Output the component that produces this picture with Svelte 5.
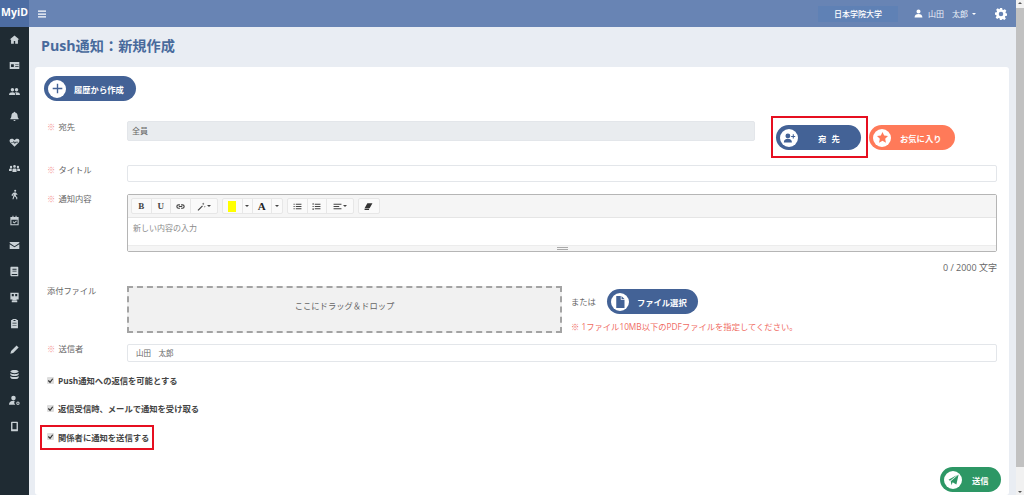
<script>
	// sidebar glyphs, drawn on a 16x16 box
	const navIcons = [
		'M8 2 1 8h2v6h4v-4h2v4h4V8h2z',
		'M1 3h14v10H1zM3 6v4h4V6zm6 0v1h5V6zm0 3v1h5V9z',
		'M5 3a2.5 2.5 0 1 1 0 5 2.5 2.5 0 0 1 0-5zm6 0a2.5 2.5 0 1 1 0 5 2.5 2.5 0 0 1 0-5zM0 13c0-3 2-4 5-4s4 1 4 4zm10 0c0-2-.3-3-1.300-3.800C9.300 9 10 9 11 9c3 0 5 1 5 4z',
		'M8 1c.6 0 1 .4 1 1 2.500.5 3.500 2.500 3.500 5 0 3 1.500 4 1.500 4v1H2v-1s1.500-1 1.500-4c0-2.500 1-4.500 3.500-5 0-.6.4-1 1-1zM6.500 13h3a1.500 1.500 0 0 1-3 0z',
		'M8 14 1.500 7.500C0 5.500 1 2.500 4 2.500c2 0 3 1 4 2.200 1-1.200 2-2.200 4-2.200 3 0 4 3 2.500 5zM3 7.500h3l1-2 1.500 3 1-1.500H13v1h-3l-1.500 2L7 7.500l-.5 1H3z',
		'M8 3a2 2 0 1 1 0 4 2 2 0 0 1 0-4zM3 4a1.700 1.700 0 1 1 0 3.400A1.700 1.700 0 0 1 3 4zm10 0a1.700 1.700 0 1 1 0 3.400A1.700 1.700 0 0 1 13 4zM5 13V9.500C5 8.500 6 8 8 8s3 .5 3 1.500V13zM0 11.500V9.500C0 8.700 1 8 3 8c.6 0 1 0 1.300.1-.2.400-.3.900-.3 1.400v2zm16 0h-4v-2c0-.5-.1-1-.3-1.400.3-.1.700-.1 1.300-.1 2 0 3 .7 3 1.500z',
		'M9 1a1.500 1.500 0 1 1 0 3 1.500 1.500 0 0 1 0-3zM7 5h3l2.500 3-1 .7L10 7.500V10l2 2v3h-1.500v-2.400L8 10.500 6.500 15H5l2-7.500-1.500 1V10H4V7.500z',
		'M2 3h3V1h1.500v2h3V1H11v2h3v12H2zm1.500 4v6.500h9V7zm1.800 3 1-1 1.500 1.500L10.500 8l1 1-3.800 3.500z',
		'M1 3h14v1.500L8 9 1 4.500zm0 3 7 4.500L15 6v7H1z',
		'M3 1h9.500c.6 0 1 .4 1 1v12c0 .6-.4 1-1 1H4c-1 0-2-.8-2-2V3c0-1 .5-2 1-2zm2 3v1.500h6V4zm0 3v1h6V7zm-1 5.500V13h8v-1.500H4z',
		'M2 1h12v10h-3v1H5v-1H2zm2 2v3h3V3zm5 0v3h3V3zM4 12.500h8V15H4z',
		'M5 3V1.500h6V3h2v12H3V3zm1.500 0v1.500h3V3zM5 7v1h6V7zm0 3v1h6v-1z',
		'M11 2l3 3-8 8-4 1 1-4z',
		'M8 1.500c3.500 0 6 1 6 2.300S11.500 6 8 6 2 5.100 2 3.800s2.500-2.300 6-2.300zM2 5.800C3 7 5.500 7.500 8 7.500S13 7 14 5.800V8c0 1.300-2.500 2.200-6 2.200S2 9.300 2 8zm0 4.200c1 1.200 3.500 1.700 6 1.700s5-.5 6-1.700v2.200c0 1.300-2.500 2.300-6 2.300s-6-1-6-2.300z',
		'M6.500 1a3.300 3.300 0 1 1 0 6.600 3.300 3.300 0 0 1 0-6.600zM0 14c0-3.500 2.500-5.500 6.500-5.500.7 0 1.300 0 1.800.2A4 4 0 0 0 9 14zm13-4.500a2.500 2.500 0 1 1 0 5 2.500 2.500 0 0 1 0-5zm0 1.500a1 1 0 1 0 0 2 1 1 0 0 0 0-2z',
		'M4 1h8c.6 0 1 .4 1 1v12c0 .6-.4 1-1 1H4c-.6 0-1-.4-1-1V2c0-.6.400-1 1-1zm1 2v9h6V3z'
	];
	const checks = [
		{ label: 'Push通知への返信を可能とする', marked: false },
		{ label: '返信受信時、メールで通知を受け取る', marked: false },
		{ label: '関係者に通知を送信する', marked: true }
	];
</script>

<div class="page">
	<aside class="side">
		<div class="brand">MyiD</div>
		<nav class="nav">
			{#each navIcons as d}
				<svg viewBox="0 0 16 16" width="11" height="11"><path fill-rule="evenodd" {d} /></svg>
			{/each}
		</nav>
	</aside>

	<div class="main">
		<header class="top">
			<svg class="burger" viewBox="0 0 8 8" width="8" height="8"><path d="M0 .5h8v1.300H0zm0 2.900h8v1.300H0zm0 2.900h8v1.300H0z" /></svg>
			<div class="school">日本学院大学</div>
			<svg class="user-ic" viewBox="0 0 16 16" width="9" height="9"><path d="M8 1a3.600 3.600 0 1 1 0 7.200A3.600 3.600 0 0 1 8 1zM1 15c0-4 3-6 7-6s7 2 7 6z" /></svg>
			<span class="user">山田　太郎</span>
			<span class="caret"></span>
			<svg class="gear" viewBox="0 0 16 16" width="12" height="12"><path fill-rule="evenodd" d="M6.500 0h3l.4 2.200 1.300.6L13.100 1.500l2.100 2.200-1.300 1.900.6 1.300L16 7.300v3l-2.200.4-.6 1.300 1.300 1.900-2.100 2.100-1.900-1.300-1.300.5L8.800 16H6.500l-.4-2.200-1.300-.5-1.900 1.300L.8 12.500 2.100 10.600 1.600 9.300 0 8.900v-3l2.200-.4.500-1.300L1.500 2.400 3.600.4l1.900 1.200 1-.4zM8 5a3 3 0 1 0 0 6 3 3 0 0 0 0-6z" /></svg>
		</header>

		<div class="body">
			<h1>Push通知：新規作成</h1>
			<section class="card">
				<button class="pill navy history">
					<span class="disc"><svg viewBox="0 0 16 16" width="11" height="11"><path class="navy-ic" d="M7 1h2v6h6v2H9v6H7V9H1V7h6z" /></svg></span>
					<span>履歴から作成</span>
				</button>

				<div class="row to-row">
					<div class="label"><i>※</i> 宛先</div>
					<div class="field readonly">全員</div>
					<div class="outlined">
						<button class="pill navy to">
							<span class="disc"><svg viewBox="0 0 16 16" width="13" height="13"><path class="navy-ic" d="M6 3a3 3 0 1 1 0 6 3 3 0 0 1 0-6zM1 14c0-3 2-4.500 5-4.500s5 1.500 5 4.500zM12 4h1.300v2H15v1.300h-1.700v2H12v-2h-2V6h2z" /></svg></span>
							<span class="to-text">宛 先</span>
						</button>
					</div>
					<button class="pill coral fav">
						<span class="disc"><svg viewBox="0 0 16 16" width="11" height="11"><path class="coral-ic" d="m8 0 2.400 5.200 5.600.7-4.100 3.900 1.100 5.700L8 12.700l-5 2.800 1.100-5.700L0 5.900l5.600-.7z" /></svg></span>
						<span>お気に入り</span>
					</button>
				</div>

				<div class="row title-row">
					<div class="label"><i>※</i> タイトル</div>
					<div class="field title-field"></div>
				</div>

				<div class="row editor-row">
					<div class="label"><i>※</i> 通知内容</div>
					<div class="editor">
						<div class="toolbar">
							<div class="group">
								<span class="tool serif">B</span>
								<span class="tool serif">U</span>
								<span class="tool"><svg viewBox="0 0 16 16" width="9" height="9"><path fill="none" stroke="#444" stroke-width="2" d="M7 5H4.500a3 3 0 0 0 0 6H7m2-6h2.500a3 3 0 0 1 0 6H9M5 8h6" /></svg></span>
								<span class="tool wide"><svg viewBox="0 0 16 16" width="9" height="9"><path fill="#444" d="m1 14 8-8 1.500 1.500-8 8zM11 1l.6 1.800 1.800.6-1.800.6-.6 1.800-.6-1.800-1.800-.6 1.800-.6zM14 7l.4 1.200 1.200.4-1.200.4L14 10.200 13.600 9l-1.200-.4 1.200-.4z" /></svg><b class="mini"></b></span>
							</div>
							<div class="group">
								<span class="tool swatch-tool"><span class="swatch"></span></span>
								<span class="tool thin"><b class="mini"></b></span>
								<span class="tool serif big">A</span>
								<span class="tool thin"><b class="mini"></b></span>
							</div>
							<div class="group">
								<span class="tool"><svg viewBox="0 0 16 16" width="9" height="9"><path fill="#444" d="M1 3h2v2H1zm4 0h10v2H5zM1 7h2v2H1zm4 0h10v2H5zm-4 4h2v2H1zm4 0h10v2H5z" /></svg></span>
								<span class="tool"><svg viewBox="0 0 16 16" width="9" height="9"><path fill="#444" d="M1 2h2v3H1zm4 1h10v2H5zM1 7h2v2H1zm4 0h10v2H5zm-4 4h2v3H1zm4 0h10v2H5z" /></svg></span>
								<span class="tool wide"><svg viewBox="0 0 16 16" width="9" height="9"><path fill="#444" d="M1 3h14v2H1zm0 4h10v2H1zm0 4h14v2H1z" /></svg><b class="mini"></b></span>
							</div>
							<div class="group">
								<span class="tool"><svg viewBox="0 0 16 16" width="9" height="9"><path fill="#333" d="M6 2h9l-5 9H1zM1 12h8v2H1z" /></svg></span>
							</div>
						</div>
						<div class="edit-area">新しい内容の入力</div>
						<div class="grip"><span></span></div>
					</div>
				</div>

				<div class="counter">0 / 2000 文字</div>

				<div class="row attach-row">
					<div class="label">添付ファイル</div>
					<div class="drop">ここにドラッグ＆ドロップ</div>
					<div class="attach-side">
						<div class="attach-line">
							<span class="or">または</span>
							<button class="pill navy file">
								<span class="disc"><svg viewBox="0 0 16 16" width="12" height="12"><path class="navy-ic" d="M3 0h6v5h5v11H3zM10 0l4 4h-4z" /></svg></span>
								<span>ファイル選択</span>
							</button>
						</div>
						<p class="note">※ 1ファイル10MB以下のPDFファイルを指定してください。</p>
					</div>
				</div>

				<div class="row sender-row">
					<div class="label"><i>※</i> 送信者</div>
					<div class="field sender">山田　太郎</div>
				</div>

				<div class="checks">
					{#each checks as c}
						<div class="check" class:marked={c.marked}>
							<span class="box"><svg viewBox="0 0 8 8" width="7" height="7"><path fill="none" stroke="#333" stroke-width="1.400" d="m1.500 4 2 2 3-4" /></svg></span>
							<span>{c.label}</span>
						</div>
					{/each}
				</div>

				<div class="actions">
					<button class="pill green send">
						<span class="disc"><svg viewBox="0 0 16 16" width="12" height="12"><path class="green-ic" d="M15.500.5 12.500 14 7.500 11 6 15 5 9.800zM2 7.500 14 1 4 9z" /></svg></span>
						<span>送信</span>
					</button>
				</div>
			</section>
		</div>
	</div>

	<div class="scroll">
		<span class="up"></span>
		<div class="thumb"></div>
		<span class="down"></span>
	</div>
</div>

<style>
	:global(body) {
		margin: 0;
		overflow: hidden;
		font-family: 'Open Sans', 'Noto Sans CJK JP', sans-serif;
	}

	.page {
		display: flex;
		width: 1024px;
		height: 495px;
		overflow: hidden;
		background: #e9edf3;
		color: #555;
	}

	.side {
		flex: none;
		width: 29px;
		background: #1f2b33;
	}

	.brand {
		height: 27px;
		background: #4d6da3;
		color: #fff;
		font-size: 10.500px;
		font-weight: 700;
		line-height: 25px;
		text-align: center;
		white-space: nowrap;
	}

	.nav {
		display: flex;
		flex-direction: column;
		align-items: center;
		gap: 14.800px;
		padding-top: 7px;
	}

	.nav svg {
		fill: #c9d1d6;
	}

	.main {
		flex: none;
		display: flex;
		flex-direction: column;
		width: 987px;
	}

	.top {
		flex: none;
		display: flex;
		align-items: center;
		height: 27px;
		padding-right: 9px;
		box-sizing: border-box;
		background: #6884b4;
		color: #fff;
	}

	.burger {
		fill: #fff;
		margin-left: 9px;
	}

	.school {
		width: 80px;
		height: 16px;
		margin-left: auto;
		background: #5f81b5;
		color: #fff;
		font-size: 8px;
		font-weight: 500;
		line-height: 16px;
		text-align: center;
	}

	.user-ic {
		fill: #fff;
		margin-left: 16px;
	}

	.user {
		margin-left: 5px;
		font-size: 8px;
		color: #eef2f8;
	}

	.caret {
		width: 0;
		height: 0;
		margin-left: 4px;
		border: 2.500px solid transparent;
		border-top-color: #fff;
		border-bottom: 0;
	}

	.gear {
		fill: #fff;
		margin-left: 19px;
	}

	.body {
		flex: 1;
		padding: 0 7px 0 6px;
	}

	h1 {
		margin: 0;
		padding: 9px 0 0 6px;
		height: 31px;
		color: #486a9c;
		font-size: 14.200px;
		font-weight: 700;
		line-height: 19px;
	}

	.card {
		display: flex;
		flex-direction: column;
		align-items: flex-start;
		height: 428px;
		padding: 9px 12px 0 9px;
		box-sizing: border-box;
		background: #fff;
		border-radius: 3px;
	}

	.pill {
		display: flex;
		align-items: center;
		flex: none;
		height: 25px;
		padding: 0 0 0 4px;
		border: 0;
		border-radius: 13px;
		color: #fff;
		font: inherit;
		font-size: 8.300px;
		font-weight: 700;
	}

	.navy {
		background: #436296;
	}

	.coral {
		background: #ff7a59;
	}

	.green {
		background: #2d9765;
	}

	.disc {
		display: flex;
		align-items: center;
		justify-content: center;
		width: 18px;
		height: 18px;
		border-radius: 50%;
		background: #fff;
	}

	.navy-ic {
		fill: #436296;
	}

	.coral-ic {
		fill: #ff7a59;
	}

	.green-ic {
		fill: #2d9765;
	}

	.history {
		width: 92px;
	}

	.history span:last-child {
		margin-left: 8px;
	}

	.row {
		display: flex;
		align-self: stretch;
	}

	.label {
		flex: none;
		width: 83px;
		padding-left: 3px;
		box-sizing: border-box;
		font-size: 8.300px;
		line-height: 12px;
		color: #666;
	}

	.label i {
		color: #f59a9a;
		font-style: normal;
		margin-right: 1px;
	}

	.field {
		box-sizing: border-box;
		border: 1px solid #e3e6ea;
		border-radius: 2px;
		background: #fff;
		font-size: 8px;
		color: #666;
		padding-left: 4px;
	}

	.to-row {
		margin-top: 20px;
		height: 44px;
	}

	.readonly {
		width: 628px;
		height: 20px;
		background: #e9ecef;
		line-height: 18px;
	}

	.outlined {
		flex: none;
		display: flex;
		width: 97px;
		height: 42px;
		margin: -5px 0 0 16px;
		padding: 6px 0 0 3px;
		box-sizing: border-box;
		border: 2px solid #e60f20;
	}

	.to {
		width: 85px;
		position: relative;
		top: 1px;
	}

	.to-text {
		margin-left: 20px;
		word-spacing: 3px;
	}

	.fav {
		width: 86px;
		margin: 4px 0 0 1px;
	}

	.fav span:last-child {
		margin-left: 9px;
	}

	.title-row {
		height: 17px;
	}

	.title-row .label {
		margin-top: -1px;
	}

	.title-field {
		flex: 1;
		height: 17px;
	}

	.editor-row {
		margin-top: 12px;
		height: 58px;
	}

	.editor-row .label {
		margin-top: -1px;
	}

	.editor {
		flex: 1;
		display: flex;
		flex-direction: column;
		box-sizing: border-box;
		border: 1px solid #b5b5b5;
		border-radius: 2px;
	}

	.toolbar {
		display: flex;
		gap: 4px;
		height: 23px;
		padding: 3px 0 0 3px;
		box-sizing: border-box;
		background: #f5f5f5;
		border-bottom: 1px solid #e5e5e5;
	}

	.group {
		display: flex;
		height: 16px;
		border: 1px solid #e7e7e7;
		border-radius: 2px;
		background: #fafafa;
		box-sizing: border-box;
	}

	.tool {
		display: flex;
		align-items: center;
		justify-content: center;
		gap: 1px;
		width: 19.500px;
		box-sizing: border-box;
		border-right: 1px solid #e7e7e7;
		color: #444;
		font-size: 8px;
		font-weight: 700;
	}

	.tool:last-child {
		border-right: 0;
	}

	.serif {
		font-family: 'Liberation Serif', serif;
		font-size: 9px;
	}

	.big {
		font-size: 11px;
		color: #222;
	}

	.wide {
		width: 26px;
	}

	.thin {
		width: 10px;
	}

	.swatch-tool {
		width: 20px;
	}

	.swatch {
		width: 8px;
		height: 11px;
		background: #ff0;
	}

	.mini {
		width: 0;
		height: 0;
		border: 2px solid transparent;
		border-top-color: #444;
		border-bottom: 0;
	}

	.edit-area {
		flex: 1;
		padding: 4px 5px 0;
		font-size: 8px;
		line-height: 12px;
		color: #8a8a8a;
	}

	.grip {
		display: flex;
		align-items: center;
		justify-content: center;
		height: 5px;
		background: #f5f5f5;
		border-top: 1px solid #ececec;
	}

	.grip span {
		width: 11px;
		height: 3px;
		border-top: 1px solid #aaa;
		border-bottom: 1px solid #aaa;
		box-sizing: border-box;
	}

	.counter {
		align-self: flex-end;
		margin: 10px 0 0;
		height: 24px;
		font-size: 9px;
		line-height: 12px;
		color: #666;
	}

	.attach-row {
		height: 47px;
	}

	.attach-row .label {
		margin-top: -1px;
		letter-spacing: -.1px;
	}

	.drop {
		flex: none;
		width: 435px;
		height: 47px;
		box-sizing: border-box;
		border: 2px dashed #a3a3a3;
		background: #f1f1f1;
		color: #666;
		font-size: 8.300px;
		line-height: 36px;
		text-align: center;
	}

	.attach-side {
		margin-left: 9px;
	}

	.attach-line {
		display: flex;
		align-items: center;
		margin-top: 3px;
		gap: 11px;
	}

	.or {
		margin-top: -2px;
		font-size: 8.300px;
		color: #666;
	}

	.file {
		width: 91px;
	}

	.file span:last-child {
		margin-left: 8px;
	}

	.note {
		margin: 7px 0 0;
		color: #ef6b5f;
		font-size: 8.300px;
		line-height: 12px;
		white-space: nowrap;
	}

	.sender-row {
		margin-top: 11px;
		height: 18px;
	}

	.sender-row .label {
		margin-top: -1px;
	}

	.sender {
		flex: 1;
		padding-left: 8px;
		font-size: 7.500px;
		line-height: 16px;
	}

	.checks {
		display: flex;
		flex-direction: column;
		gap: 8px;
		margin: 8px 0 0 -4px;
	}

	.check {
		display: flex;
		align-items: center;
		gap: 4px;
		width: 114px;
		height: 20px;
		padding-left: 7px;
		box-sizing: border-box;
		color: #444;
		font-size: 8.300px;
		font-weight: 700;
		white-space: nowrap;
	}

	.marked {
		height: 25px;
		margin-top: -1px;
		border: 2px solid #e60f20;
		padding: 0 0 2px 5px;
	}

	.box {
		display: flex;
		align-items: center;
		justify-content: center;
		width: 7px;
		height: 7px;
		background: #ddd;
		border-radius: 1px;
	}

	.actions {
		align-self: flex-end;
		margin: 17px -4px 0 0;
	}

	.send {
		width: 61px;
	}

	.send span:last-child {
		margin-left: 10px;
	}

	.scroll {
		flex: none;
		display: flex;
		flex-direction: column;
		align-items: center;
		width: 8px;
		background: #f1f1f1;
	}

	.up,
	.down {
		flex: none;
		width: 0;
		height: 0;
		margin: 2px 0;
		border: 2px solid transparent;
	}

	.up {
		border-bottom-color: #555;
		border-top: 0;
	}

	.down {
		border-top-color: #555;
		border-bottom: 0;
	}

	.thumb {
		flex: 1;
		align-self: stretch;
		margin: 2px 0 22px;
		background: #c1c1c1;
	}
</style>
